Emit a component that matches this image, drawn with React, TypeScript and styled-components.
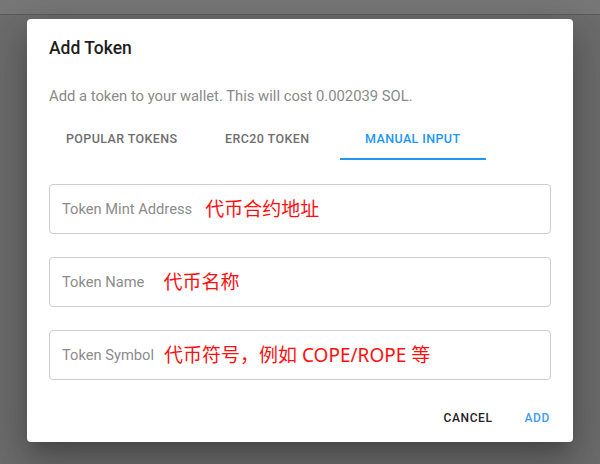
import styled, { createGlobalStyle } from "styled-components";

const GlobalStyle = createGlobalStyle`
  html, body {
    margin: 0;
    padding: 0;
    background: #6c6c6c;
    font-family: Roboto, "Noto Sans", Arial, sans-serif;
  }
`;

const fields = [
  { label: "Token Mint Address", note: "代币合约地址", gap: 13 },
  { label: "Token Name", note: "代币名称", gap: 19 },
  { label: "Token Symbol", note: "代币符号，例如 COPE/ROPE 等", gap: 10 },
];

const tabs = ["Popular Tokens", "ERC20 Token", "Manual Input"];

const App = () => {
  return (
    <>
      <GlobalStyle />
      <Screen>
        <TopBar />
        <Backdrop>
          <Dialog>
            <Title>Add Token</Title>
            <Subtitle>Add a token to your wallet. This will cost 0.002039 SOL.</Subtitle>
            <TabRow>
              {tabs.map((tab, i) => (
                <Tab key={tab} $active={i === 2}>
                  {tab}
                </Tab>
              ))}
            </TabRow>
            <FieldList>
              {fields.map(field => (
                <Field key={field.label}>
                  <FieldLabel>{field.label}</FieldLabel>
                  <Note $gap={field.gap}>{field.note}</Note>
                </Field>
              ))}
            </FieldList>
            <Actions>
              <ActionButton>Cancel</ActionButton>
              <ActionButton $primary>Add</ActionButton>
            </Actions>
          </Dialog>
        </Backdrop>
      </Screen>
    </>
  );
};
export default App;

const Screen = styled.div`
  width: 600px;
  height: 464px;
  overflow: hidden;
  background: #6c6c6c;
`;

const TopBar = styled.div`
  height: 14px;
  background: #777777;
  border-bottom: 1px solid #5c5c5c;
`;

const Backdrop = styled.div`
  padding: 4px 0 0 27px;
`;

const Dialog = styled.div`
  width: 546px;
  height: 423px;
  box-sizing: border-box;
  background: #ffffff;
  border-radius: 4px;
  padding: 0 22px;
  display: flex;
  flex-direction: column;
  box-shadow: 0 11px 15px -7px rgba(0, 0, 0, 0.2),
    0 24px 38px 3px rgba(0, 0, 0, 0.14), 0 9px 46px 8px rgba(0, 0, 0, 0.12);
`;

const Title = styled.h2`
  margin: 17px 0 0 0;
  font-size: 17.5px;
  line-height: 24px;
  font-weight: 500;
  color: #1e1e1e;
`;

const Subtitle = styled.p`
  margin: 26px 0 0 0;
  font-size: 14.8px;
  line-height: 20px;
  color: #8a8a8a;
`;

const TabRow = styled.div`
  margin-top: 12px;
  display: flex;
`;

const Tab = styled.div<{ $active?: boolean }>`
  width: 145.5px;
  height: 42px;
  box-sizing: border-box;
  display: flex;
  align-items: center;
  justify-content: center;
  text-transform: uppercase;
  font-size: 12.5px;
  font-weight: 500;
  letter-spacing: 0.4px;
  color: ${p => (p.$active ? "#2196f3" : "#6f6f6f")};
  border-bottom: 2px solid ${p => (p.$active ? "#2196f3" : "transparent")};
`;

const FieldList = styled.div`
  margin-top: 24px;
  display: flex;
  flex-direction: column;
  gap: 23px;
`;

const Field = styled.div`
  height: 50px;
  box-sizing: border-box;
  border: 1px solid #cfcfcf;
  border-radius: 4px;
  padding: 0 12px;
  display: flex;
  align-items: center;
`;

const FieldLabel = styled.span`
  font-size: 14.7px;
  color: #8c8c8c;
`;

const Note = styled.span<{ $gap: number }>`
  margin-left: ${p => p.$gap}px;
  margin-top: -3px;
  font-family: "Noto Sans", "Noto Sans CJK SC", sans-serif;
  font-size: 19px;
  color: #ff1010;
`;

const Actions = styled.div`
  margin-top: 26px;
  display: flex;
  justify-content: flex-end;
  align-items: center;
  gap: 32px;
  padding-right: 1px;
`;

const ActionButton = styled.button<{ $primary?: boolean }>`
  border: none;
  background: none;
  padding: 0;
  font-family: Roboto, Arial, sans-serif;
  text-transform: uppercase;
  font-size: 12px;
  font-weight: 500;
  letter-spacing: 0.6px;
  line-height: 24px;
  color: ${p => (p.$primary ? "#3d9bf3" : "#222222")};
`;
